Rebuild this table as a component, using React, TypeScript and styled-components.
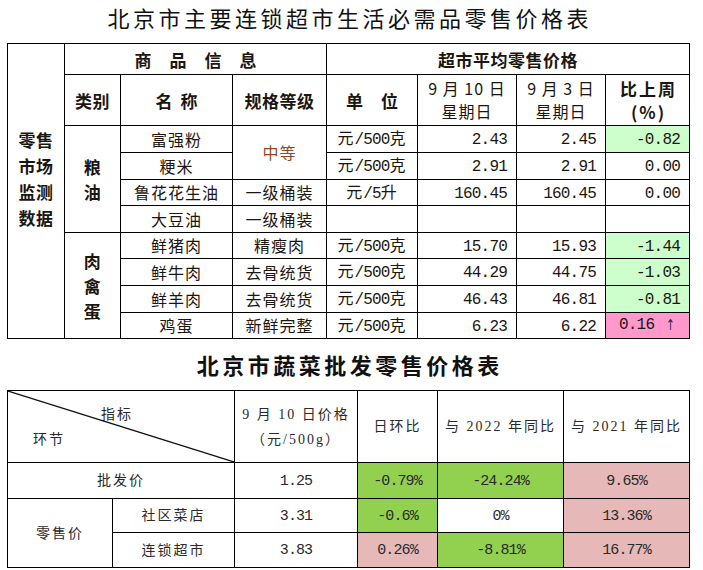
import React from "react";
import styled, { createGlobalStyle } from "styled-components";

const Global = createGlobalStyle`
  html, body { margin: 0; padding: 0; background: #fff; }
  body { font-family: "Liberation Serif", "Noto Sans CJK SC", serif; color: #111; }
`;

const Page = styled.div`
  width: 703px;
  padding-left: 7px;
  box-sizing: border-box;
`;

const Title = styled.h1<{ $h: number; $weight: number }>`
  margin: 0;
  width: 682px;
  height: ${(p) => p.$h}px;
  line-height: ${(p) => p.$h * 0.8}px;
  font-family: "Noto Sans CJK SC", sans-serif;
  font-size: 22px;
  font-weight: ${(p) => p.$weight};
  letter-spacing: 3.5px;
  text-indent: 3.5px;
  text-align: center;
  color: #111;
`;

const Title2 = styled(Title)`
  line-height: ${(p) => p.$h}px;
`;

const Grid = styled.table`
  border-collapse: collapse;
  table-layout: fixed;
  width: 682px;
`;

const Row = styled.tr<{ $h: number }>`
  height: ${(p) => p.$h}px;
`;

const Cell = styled.td<{
  $align?: "left" | "center" | "right";
  $bg?: string;
  $bold?: boolean;
  $color?: string;
  $spacing?: number;
}>`
  border: 1px solid #000;
  padding: 0 ${(p) => (p.$align === "right" ? "9px" : "0")} 0
    ${(p) => (p.$spacing ? `${p.$spacing}px` : "0")};
  text-align: ${(p) => p.$align ?? "center"};
  vertical-align: middle;
  background: ${(p) => p.$bg ?? "transparent"};
  font-family: "Noto Sans CJK SC", sans-serif;
  font-weight: ${(p) => (p.$bold ? 700 : 400)};
  font-size: ${(p) => (p.$bold ? 17 : 16)}px;
  letter-spacing: ${(p) => (p.$spacing ? `${p.$spacing}px` : p.$bold ? "0.5px" : "1px")};
  color: ${(p) => p.$color ?? "#1c1610"};
  line-height: 21px;
  white-space: nowrap;
`;

const HeadCell = styled(Cell)`
  line-height: 23px;
`;

const SideCell = styled(Cell)`
  line-height: 26px;
  padding-bottom: 24px;
`;

const StackCell = styled(Cell)`
  line-height: 25px;
`;

const Num = styled.span`
  font-family: "Liberation Mono", monospace;
  font-size: 16px;
  letter-spacing: -0.8px;
`;

const UpCell = styled(Cell)`
  padding: 0 11px 0 13px;
`;

const UpInner = styled.div`
  display: flex;
  justify-content: space-between;
  align-items: center;
`;

const Arrow = styled.span`
  font-family: "DejaVu Sans", sans-serif;
  font-size: 15px;
  color: #1a2240;
  transform: scaleX(0.7);
`;

/* second table */
const Cell2 = styled.td<{ $bg?: string }>`
  border: 1px solid #000;
  padding: 0;
  text-align: center;
  vertical-align: middle;
  background: ${(p) => p.$bg ?? "transparent"};
  font-family: "Liberation Serif", "Noto Sans CJK SC", serif;
  font-size: 14px;
  letter-spacing: 2px;
  color: #2a2a2a;
  line-height: 25px;
  white-space: nowrap;
`;

const Num2 = styled.span`
  font-family: "Liberation Mono", monospace;
  font-size: 15px;
  letter-spacing: -0.9px;
`;

const DiagCell = styled(Cell2)`
  position: relative;
  text-align: left;
  vertical-align: top;
`;

const DiagLine = styled.svg`
  position: absolute;
  inset: 0;
  width: 100%;
  height: 100%;
  pointer-events: none;
`;

const DiagLabel = styled.div<{ $left: number; $top: number }>`
  padding-left: ${(p) => p.$left}px;
  margin-top: ${(p) => p.$top}px;
  line-height: 22px;
`;

type PriceRow = {
  name: string;
  unit?: React.ReactNode;
  a?: string;
  b?: string;
  c?: string;
  bg?: string;
};

const GREEN_L = "#ccffcc";
const PINK_L = "#ff99cc";
const GREEN = "#92d050";
const PINK = "#e6b8b7";

const unit500 = (
  <>
    元<Num>/500</Num>克
  </>
);

export default function App() {
  const heights = [27, 27, 26, 27, 26, 27, 27, 26];
  const rows: PriceRow[] = [
    { name: "富强粉", unit: unit500, a: "2.43", b: "2.45", c: "-0.82", bg: GREEN_L },
    { name: "粳米", unit: unit500, a: "2.91", b: "2.91", c: "0.00" },
    { name: "鲁花花生油", unit: <>元<Num>/5</Num>升</>, a: "160.45", b: "160.45", c: "0.00" },
    { name: "大豆油" },
    { name: "鲜猪肉", unit: unit500, a: "15.70", b: "15.93", c: "-1.44", bg: GREEN_L },
    { name: "鲜牛肉", unit: unit500, a: "44.29", b: "44.75", c: "-1.03", bg: GREEN_L },
    { name: "鲜羊肉", unit: unit500, a: "46.43", b: "46.81", c: "-0.81", bg: GREEN_L },
    { name: "鸡蛋", unit: unit500, a: "6.23", b: "6.22" },
  ];
  const grades: Record<number, React.ReactNode> = {
    2: "一级桶装",
    3: "一级桶装",
    4: "精瘦肉",
    5: "去骨统货",
    6: "去骨统货",
    7: "新鲜完整",
  };

  return (
    <Page>
      <Global />
      <Title $h={43} $weight={400}>
        北京市主要连锁超市生活必需品零售价格表
      </Title>
      <Grid>
        <colgroup>
          <col style={{ width: 57 }} />
          <col style={{ width: 56 }} />
          <col style={{ width: 112 }} />
          <col style={{ width: 94 }} />
          <col style={{ width: 91 }} />
          <col style={{ width: 99 }} />
          <col style={{ width: 89 }} />
          <col style={{ width: 84 }} />
        </colgroup>
        <tbody>
          <Row $h={31}>
            <SideCell rowSpan={10} $bold>
              零售
              <br />
              市场
              <br />
              监测
              <br />
              数据
            </SideCell>
            <Cell colSpan={3} $bold $spacing={18}>
              商品信息
            </Cell>
            <Cell colSpan={4} $bold>
              超市平均零售价格
            </Cell>
          </Row>
          <Row $h={51}>
            <HeadCell $bold>类别</HeadCell>
            <HeadCell $bold $spacing={8}>
              名称
            </HeadCell>
            <HeadCell $bold>规格等级</HeadCell>
            <HeadCell $bold $spacing={18}>
              单位
            </HeadCell>
            <HeadCell>
              9 月 10 日
              <br />
              星期日
            </HeadCell>
            <HeadCell>
              9 月 3 日
              <br />
              星期日
            </HeadCell>
            <HeadCell $bold $spacing={2}>
              比上周
              <br />
              (%)
            </HeadCell>
          </Row>
          {rows.map((r, i) => (
            <Row key={r.name} $h={heights[i]}>
              {i === 0 && (
                <StackCell rowSpan={4} $bold>
                  粮
                  <br />油
                </StackCell>
              )}
              {i === 4 && (
                <StackCell rowSpan={4} $bold>
                  肉
                  <br />禽
                  <br />蛋
                </StackCell>
              )}
              <Cell>{r.name}</Cell>
              {i === 0 && (
                <Cell rowSpan={2} $color="#8c4a1e">
                  中等
                </Cell>
              )}
              {i !== 0 && i !== 1 && <Cell>{grades[i]}</Cell>}
              <Cell>{r.unit}</Cell>
              <Cell $align="right">{r.a && <Num>{r.a}</Num>}</Cell>
              <Cell $align="right">{r.b && <Num>{r.b}</Num>}</Cell>
              {i === 7 ? (
                <UpCell $bg={PINK_L}>
                  <UpInner>
                    <Num>0.16</Num>
                    <Arrow>↑</Arrow>
                  </UpInner>
                </UpCell>
              ) : (
                <Cell $align="right" $bg={r.bg}>
                  {r.c && <Num>{r.c}</Num>}
                </Cell>
              )}
            </Row>
          ))}
        </tbody>
      </Grid>

      <Title2 $h={51} $weight={700}>
        北京市蔬菜批发零售价格表
      </Title2>
      <Grid>
        <colgroup>
          <col style={{ width: 105 }} />
          <col style={{ width: 122 }} />
          <col style={{ width: 123 }} />
          <col style={{ width: 80 }} />
          <col style={{ width: 126 }} />
          <col style={{ width: 126 }} />
        </colgroup>
        <tbody>
          <Row $h={72}>
            <DiagCell colSpan={2}>
              <DiagLine viewBox="0 0 100 100" preserveAspectRatio="none">
                <line x1="0" y1="0" x2="100" y2="100" stroke="#111" strokeWidth="1.2" vectorEffect="non-scaling-stroke" />
              </DiagLine>
              <DiagLabel $left={93} $top={13}>
                指标
              </DiagLabel>
              <DiagLabel $left={25} $top={3}>
                环节
              </DiagLabel>
            </DiagCell>
            <Cell2>
              9 月 10 日价格
              <br />
              （元/500g）
            </Cell2>
            <Cell2>日环比</Cell2>
            <Cell2>与 2022 年同比</Cell2>
            <Cell2>与 2021 年同比</Cell2>
          </Row>
          <Row $h={36}>
            <Cell2 colSpan={2}>批发价</Cell2>
            <Cell2>
              <Num2>1.25</Num2>
            </Cell2>
            <Cell2 $bg={GREEN}>
              <Num2>-0.79%</Num2>
            </Cell2>
            <Cell2 $bg={GREEN}>
              <Num2>-24.24%</Num2>
            </Cell2>
            <Cell2 $bg={PINK}>
              <Num2>9.65%</Num2>
            </Cell2>
          </Row>
          <Row $h={34}>
            <Cell2 rowSpan={2}>零售价</Cell2>
            <Cell2>社区菜店</Cell2>
            <Cell2>
              <Num2>3.31</Num2>
            </Cell2>
            <Cell2 $bg={GREEN}>
              <Num2>-0.6%</Num2>
            </Cell2>
            <Cell2>
              <Num2>0%</Num2>
            </Cell2>
            <Cell2 $bg={PINK}>
              <Num2>13.36%</Num2>
            </Cell2>
          </Row>
          <Row $h={35}>
            <Cell2>连锁超市</Cell2>
            <Cell2>
              <Num2>3.83</Num2>
            </Cell2>
            <Cell2 $bg={PINK}>
              <Num2>0.26%</Num2>
            </Cell2>
            <Cell2 $bg={GREEN}>
              <Num2>-8.81%</Num2>
            </Cell2>
            <Cell2 $bg={PINK}>
              <Num2>16.77%</Num2>
            </Cell2>
          </Row>
        </tbody>
      </Grid>
    </Page>
  );
}
